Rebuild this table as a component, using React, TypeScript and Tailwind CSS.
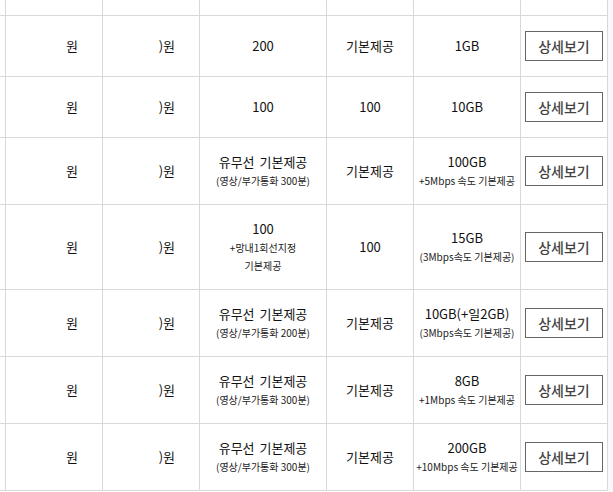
const rows = [
  { h: "h-[60px]", voice: ["200"], sms: "기본제공", data: "1GB", dataSub: "" },
  { h: "h-[60px]", voice: ["100"], sms: "100", data: "10GB", dataSub: "" },
  { h: "h-[66px]", voice: ["유무선 기본제공", "(영상/부가통화 300분)"], sms: "기본제공", data: "100GB", dataSub: "+5Mbps 속도 기본제공" },
  { h: "h-[84px]", voice: ["100", "+망내1회선지정", "기본제공"], sms: "100", data: "15GB", dataSub: "(3Mbps속도 기본제공)" },
  { h: "h-[66px]", voice: ["유무선 기본제공", "(영상/부가통화 200분)"], sms: "기본제공", data: "10GB(+일2GB)", dataSub: "(3Mbps속도 기본제공)" },
  { h: "h-[66px]", voice: ["유무선 기본제공", "(영상/부가통화 300분)"], sms: "기본제공", data: "8GB", dataSub: "+1Mbps 속도 기본제공" },
  { h: "h-[66px]", voice: ["유무선 기본제공", "(영상/부가통화 300분)"], sms: "기본제공", data: "200GB", dataSub: "+10Mbps 속도 기본제공" },
];

const cell = "bg-white flex flex-col items-center justify-center text-center";

export default function App() {
  return (
    <div
      className="w-[613px] h-[492px] flex bg-white overflow-hidden text-[#111] text-[13px]"
      style={{ fontFamily: '"Noto Sans CJK KR", "Noto Sans", sans-serif' }}
    >
      <div className="w-[608px] shrink-0">
        <div className="grid grid-cols-[5px_96px_96px_126px_86px_106px_86px] gap-px bg-[#d9d9d9] border-r border-b border-[#d9d9d9]">
          {/* header row, cut off at top */}
          {Array.from({ length: 7 }).map((_, i) => (
            <div key={i} className="bg-white h-[15px]" />
          ))}
          {rows.map((r, i) => (
            <Row key={i} r={r} />
          ))}
        </div>
      </div>
      <div className="flex-1 bg-[#f8f8f8]" />
    </div>
  );
}

function Row({ r }: { r: (typeof rows)[number] }) {
  return (
    <>
      <div className={`bg-white ${r.h}`} />
      <div className={`bg-white ${r.h} flex items-center justify-end pr-[24px] leading-[20px]`}>원</div>
      <div className={`bg-white ${r.h} flex items-center justify-end pr-[24px] leading-[20px]`}>)원</div>
      <div className={`${cell} ${r.h}`}>
        {r.voice.map((t, j) =>
          j === 0 ? (
            <div key={j} className="leading-[20px] [word-spacing:2px]">
              {t}
            </div>
          ) : (
            <div key={j} className="text-[10px] leading-[18px] text-[#222] whitespace-nowrap">
              {t}
            </div>
          )
        )}
      </div>
      <div className={`${cell} ${r.h} leading-[20px]`}>{r.sms}</div>
      <div className={`${cell} ${r.h}`}>
        <div className="leading-[20px]">{r.data}</div>
        {r.dataSub && (
          <div className="text-[10px] leading-[18px] text-[#222] whitespace-nowrap">{r.dataSub}</div>
        )}
      </div>
      <div className={`${cell} ${r.h}`}>
        <button className="w-[78px] h-[30px] border border-[#666] bg-white text-[14px] font-medium text-[#444] flex items-center justify-center">
          상세보기
        </button>
      </div>
    </>
  );
}
